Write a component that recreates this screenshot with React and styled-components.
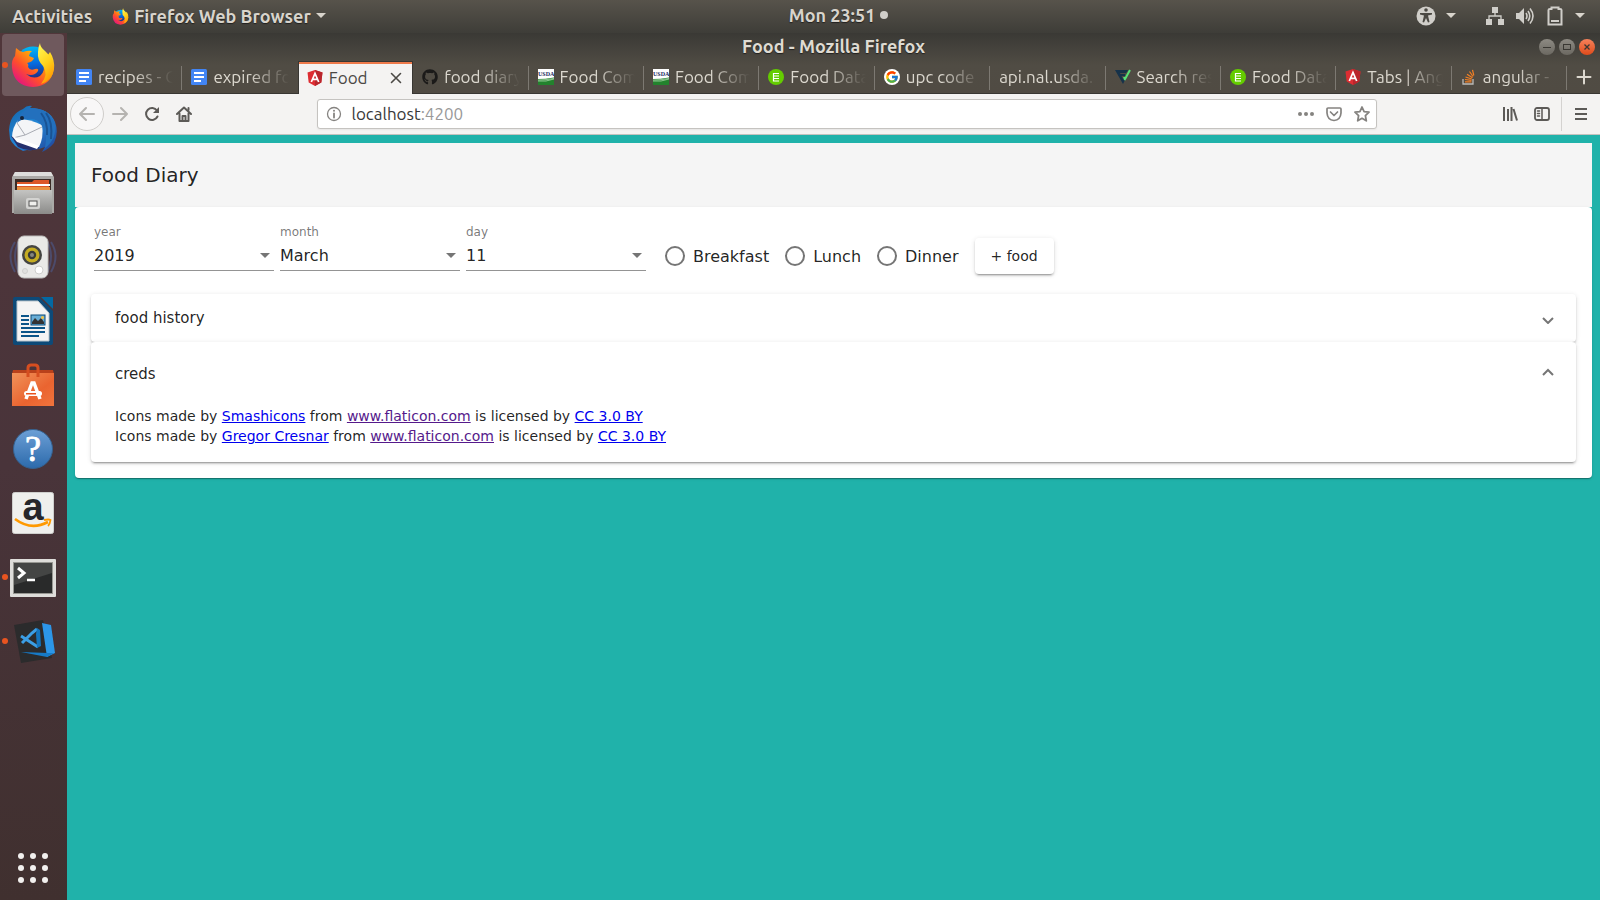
import React from "react";
import styled, { createGlobalStyle, css } from "styled-components";
import { FcGoogle } from "react-icons/fc";
import { FaGithub } from "react-icons/fa";

const Global = createGlobalStyle`
  * { box-sizing: border-box; }
  html, body { margin: 0; padding: 0; background: #20b2aa; }
  button, input, select { font: inherit; color: inherit; margin: 0; }
`;

const uiFont = `"Ubuntu", "Noto Sans", "Open Sans", sans-serif`;
const appFont = `"DejaVu Sans", sans-serif`;

/* ---------- desktop shell ---------- */

const Desktop = styled.div`
  display: flex;
  flex-direction: column;
  min-height: 100vh;
  font-family: ${uiFont};
`;

const TopBar = styled.header`
  display: grid;
  grid-template-columns: 1fr auto 1fr;
  align-items: start;
  height: 33px;
  padding: 0 15px 0 12px;
  background: linear-gradient(#57534b, #3e3d38);
  color: #d8d4cc;
  font-size: 18px;
  font-weight: 700;
  text-shadow: 0 1px 1px #22211f;
`;

const BarGroup = styled.div`
  display: flex;
  align-items: center;
  gap: ${(p) => p.$gap}px;
  justify-content: ${(p) => (p.$end ? "flex-end" : "flex-start")};
`;

const BarButton = styled.button`
  display: flex;
  align-items: center;
  gap: ${(p) => p.$gap || 5}px;
  height: 32px;
  padding: 0;
  border: 0;
  background: none;
  line-height: 32px;
  white-space: nowrap;
  text-shadow: inherit;
`;

const Clock = styled(BarButton)`
  height: 30px;
  padding-left: 80px;
`;

const ClockDot = styled.span`
  width: 8px;
  height: 8px;
  border-radius: 50%;
  background: #d0cec9;
`;

const Main = styled.div`
  display: flex;
  flex: 1;
`;

const Dock = styled.nav`
  display: flex;
  flex-direction: column;
  gap: 2px;
  width: 67px;
  flex: none;
  padding: 1px 3px 1px 2px;
  background: linear-gradient(#50363a, #49343a 50%, #40302f);
`;

const DockItem = styled.button`
  position: relative;
  display: grid;
  place-items: center;
  height: 62px;
  padding: 0;
  border: 0;
  border-radius: 4px;
  background: ${(p) => (p.$active ? "#6f595d" : "none")};
  margin-top: ${(p) => (p.$last ? "auto" : 0)};
  ${(p) =>
    p.$running &&
    css`
      &::before {
        content: "";
        position: absolute;
        left: 0;
        top: 28px;
        width: 6px;
        height: 6px;
        border-radius: 50%;
        background: #e95420;
      }
    `}
`;

const Browser = styled.div`
  display: flex;
  flex-direction: column;
  flex: 1;
  min-width: 0;
`;

const Chrome = styled.div`
  background: linear-gradient(#3a3935, #504c44 32px, #504b43);
`;

const TitleBar = styled.div`
  display: grid;
  grid-template-columns: 1fr auto 1fr;
  align-items: center;
  height: 28px;
  padding: 0 5px;
  color: #dfdbd2;
  font-size: 18px;
  font-weight: 700;
  line-height: 24px;
  text-shadow: 0 1px 1px #22211f;
`;

const Title = styled.span`
  grid-column: 2;
  padding-bottom: 2px;
`;

const WindowButtons = styled.div`
  display: flex;
  justify-content: flex-end;
  gap: 4px;
`;

const WindowButton = styled.button`
  display: grid;
  place-items: center;
  width: 16px;
  height: 16px;
  padding: 0;
  border: 0;
  border-radius: 50%;
  color: #3a3833;
  background: ${(p) => (p.$close ? "linear-gradient(#f5825b, #df4b1b)" : "linear-gradient(#8d8a83, #6b6861)")};
`;

const TabStrip = styled.div`
  display: flex;
  height: 33px;
  border-bottom: 1px solid #393733;
`;

const Tab = styled.button`
  position: relative;
  display: flex;
  align-items: center;
  gap: 6px;
  flex: 1 1 0;
  min-width: 0;
  height: ${(p) => (p.$active ? 33 : 32)}px;
  padding: 0 9px;
  border: 0;
  background: none;
  color: #dcd8cf;
  font-size: 17px;
  line-height: 32px;
  text-align: left;
  ${(p) =>
    p.$active
      ? css`
          padding: 0 8px;
          background: #f4f3f2;
          color: #4b4945;
          border: 1px solid #393733;
          border-bottom: 0;
          box-shadow: inset 0 2px #ee7a4b;
        `
      : css`
          &::after {
            content: "";
            display: ${p.$plain ? "none" : "block"};
            position: absolute;
            right: 0;
            top: 5px;
            width: 1px;
            height: 24px;
            background: #7d7972;
          }
        `}
`;

const TabLabel = styled.span`
  flex: 1;
  min-width: 0;
  overflow: hidden;
  white-space: nowrap;
  mask-image: ${(p) => (p.$fade ? "linear-gradient(to right, #000 calc(100% - 40px), transparent)" : "none")};
`;

const IconButton = styled.button`
  display: grid;
  place-items: center;
  width: ${(p) => p.$w || 32}px;
  height: ${(p) => p.$h || 32}px;
  flex: none;
  padding: 0;
  border: 0;
  background: none;
  color: ${(p) => p.$color || "#5c5a57"};
`;

const BackButton = styled(IconButton)`
  width: 34px;
  height: 34px;
  border: 1px solid #cfcdca;
  border-radius: 50%;
  background: #f8f7f7;
`;

const NavBar = styled.div`
  display: flex;
  align-items: center;
  height: 41px;
  padding: 0 3px;
  background: #f4f3f2;
  border-bottom: 1px solid #c4c2bf;
`;

const Spacer = styled.div`
  flex: 1;
`;

const AddressBar = styled.div`
  display: flex;
  align-items: center;
  flex: 9 1 0;
  height: 30px;
  border: 1px solid #c5c3c0;
  border-radius: 3px;
  background: #fff;
  box-shadow: 0 1px 2px rgba(0, 0, 0, 0.06);
`;

const Address = styled.div`
  flex: 1;
  padding-left: 1px;
  font-size: 17px;
  line-height: 30px;
  color: #383838;
  span { color: #999; }
`;

const ToolDivider = styled.span`
  width: 1px;
  height: 34px;
  margin: 0 3px;
  background: #d4d2d0;
`;

/* ---------- food diary page ---------- */

const Page = styled.main`
  flex: 1;
  padding: 8px;
  background: #20b2aa;
  color: rgba(0, 0, 0, 0.87);
  font-family: ${appFont};
`;

const AppBar = styled.h1`
  display: flex;
  align-items: center;
  height: 64px;
  margin: 0;
  padding: 0 16px;
  background: #f5f5f5;
  font-size: 20px;
  font-weight: 400;
`;

const Card = styled.section`
  padding: 16px;
  border-radius: 4px;
  background: #fff;
  box-shadow: 0 2px 1px -1px rgba(0, 0, 0, 0.2), 0 1px 1px rgba(0, 0, 0, 0.14), 0 1px 3px rgba(0, 0, 0, 0.12);
`;

const FormRow = styled.form`
  display: flex;
  align-items: flex-start;
  padding-bottom: 20px;
`;

const Field = styled.label`
  display: grid;
  width: 180px;
  margin: 0 3px;
`;

const FieldLabel = styled.span`
  font-size: 12px;
  line-height: 18px;
  color: rgba(0, 0, 0, 0.54);
`;

const SelectBox = styled.span`
  display: grid;
  grid-template-columns: 1fr 10px;
  align-items: center;
  padding-right: 4px;
  border-bottom: 1px solid #949494;
  svg { grid-area: 1 / 2; pointer-events: none; }
`;

const Select = styled.select`
  grid-area: 1 / 1 / 2 / 3;
  height: 29px;
  padding: 0;
  border: 0;
  outline: 0;
  appearance: none;
  background: none;
  font-size: 16px;
`;

const Controls = styled.div`
  display: flex;
  align-items: center;
  gap: 16px;
  margin: 15px 0 0 16px;
`;

const RadioLabel = styled.label`
  display: flex;
  align-items: center;
  gap: 8px;
  font-size: 16px;
`;

const Radio = styled.input`
  width: 20px;
  height: 20px;
  appearance: none;
  border: 2px solid rgba(0, 0, 0, 0.54);
  border-radius: 50%;
  &:checked { box-shadow: inset 0 0 0 3px #fff; background: #ff4081; }
`;

const AddButton = styled.button`
  height: 36px;
  padding: 0 16px;
  border: 0;
  border-radius: 4px;
  background: #fff;
  font-size: 14px;
  box-shadow: 0 3px 1px -2px rgba(0, 0, 0, 0.2), 0 2px 2px rgba(0, 0, 0, 0.14), 0 1px 5px rgba(0, 0, 0, 0.12);
`;

const Panel = styled.section`
  border-radius: 4px;
  background: #fff;
  box-shadow: 0 3px 1px -2px rgba(0, 0, 0, 0.2), 0 2px 2px rgba(0, 0, 0, 0.14), 0 1px 5px rgba(0, 0, 0, 0.12);
`;

const PanelHeader = styled.button`
  display: flex;
  align-items: center;
  justify-content: space-between;
  width: 100%;
  height: ${(p) => (p.$open ? 64 : 48)}px;
  padding: 0 22px 0 24px;
  border: 0;
  background: none;
  font-size: 15px;
`;

const PanelBody = styled.div`
  padding: 0 24px 16px;
  font-size: 14px;
  line-height: 20px;
`;

const Link = styled.a`
  color: ${(p) => (p.$visited ? "#551a8b" : "#0000ee")};
`;

/* ---------- icons ---------- */

const FirefoxIcon = ({ size, id }) => (
  <svg width={size} height={size} viewBox="0 0 44 46">
    <defs>
      <linearGradient id={id + "a"} x1="0.9" y1="0.1" x2="0.15" y2="0.9">
        <stop offset="0" stopColor="#ffe226" /><stop offset=".35" stopColor="#ff9a0c" />
        <stop offset=".65" stopColor="#ff4f2b" /><stop offset="1" stopColor="#e3157f" />
      </linearGradient>
      <linearGradient id={id + "b"} x1=".5" y1="0" x2=".6" y2="1">
        <stop offset="0" stopColor="#00b8f5" /><stop offset=".5" stopColor="#0668dc" /><stop offset="1" stopColor="#25206c" />
      </linearGradient>
      <linearGradient id={id + "c"} x1=".3" y1="0" x2=".7" y2="1">
        <stop offset="0" stopColor="#fff44f" /><stop offset=".5" stopColor="#ffd21c" /><stop offset="1" stopColor="#ff9100" />
      </linearGradient>
    </defs>
    <circle cx="22" cy="22" r="17.5" fill={`url(#${id}b)`} />
    <path d="M5 6 Q8 9 12 10 Q17 8 21 9 Q18 11 18 14 L23 16 Q22 20 16 21 Q18 22 17 25 Q19 29 24 27 Q28 26 27 29 Q23 35 15 32 Q22 38 29 34 Q35 29 32 20 L39 10 Q44 18 43 27 Q40 44 22 45 Q3 44 1 26 Q0 18 4 14 Z" fill={`url(#${id}a)`} />
    <path d="M29 1 Q29 5 34 9 Q43 17 43 26 Q42 38 30 42 Q38 32 32 24 Q26 18 27 10 Q27 5 29 1 Z" fill={`url(#${id}c)`} />
  </svg>
);

const ThunderbirdIcon = () => (
  <svg width="50" height="48" viewBox="0 0 50 48">
    <defs>
      <linearGradient id="tb" x1="0" y1="0" x2="1" y2="1">
        <stop offset="0" stopColor="#1464a8" /><stop offset=".5" stopColor="#2387d8" /><stop offset="1" stopColor="#213c91" />
      </linearGradient>
    </defs>
    <path d="M1 25 Q2 9 15 4 Q19 0 24 1 L22 3 Q41 3 47 17 Q51 28 46 38 Q41 44 34 47 L37 42 Q28 46 19 45 L15 46 Q5 41 2 34 Z" fill="url(#tb)" />
    <path d="M11 14 Q22 14 34 20 Q36 32 31 42 L4 33 Q4 22 11 14 Z" fill="#f4f5f7" />
    <path d="M9 18 L17 30 L34 22 M17 30 L5 33" stroke="#a8abb3" strokeWidth="1" fill="none" />
    <path d="M9 18 Q11 6 22 3 Q42 3 47 19 Q49 34 37 43 Q40 29 34 21 Q29 12 19 14 Q13 14 9 18" fill="#2370bd" />
    <path d="M38 8 Q45 17 43 34 M33 8 Q40 17 39 30" stroke="#195394" strokeWidth="2" fill="none" />
    <path d="M3 31 L32 43 Q22 48 10 42 Z" fill="#26306d" />
    <path d="M4 31 L31 41 L29 44 L9 37 Z" fill="#fff" />
    <circle cx="14" cy="13" r="2" fill="#17253a" />
  </svg>
);

const FilesIcon = () => (
  <svg width="42" height="44" viewBox="0 0 42 44">
    <defs><linearGradient id="fi" x2="0" y2="1"><stop stopColor="#c4c4c2" /><stop offset="1" stopColor="#8b8b89" /></linearGradient></defs>
    <path d="M3 1 H39 L42 6 V42 H0 V6 Z" fill="#aaa9a6" />
    <path d="M3 1 H39 L41 5 H1 Z" fill="#dededc" />
    <rect x="3" y="8" width="36" height="13" fill="#3a2b25" />
    <path d="M5 11 H20 L22 9 H37 V20 H5 Z" fill="#dc5728" />
    <rect x="5" y="13" width="33" height="2" fill="#fff" /><rect x="5" y="16" width="33" height="3" fill="#e99241" />
    <rect x="2" y="19" width="38" height="24" fill="url(#fi)" />
    <rect x="14" y="27" width="14" height="11" rx="2" fill="#d3d3d1" />
    <rect x="17" y="30" width="8" height="5" fill="#efefed" stroke="#555" />
  </svg>
);

const SpeakerIcon = () => (
  <svg width="50" height="44" viewBox="0 0 50 44">
    <path d="M7 7 Q-2 21 7 37 M11 6 Q3 21 11 38 M43 7 Q52 21 43 37 M39 6 Q47 21 39 38" stroke="#4c4b6b" strokeWidth="2" fill="none" />
    <rect x="10" y="1" width="30" height="42" rx="6" fill="#e9e9e7" stroke="#bdbdbb" />
    <circle cx="24" cy="20" r="10" fill="#444442" /><circle cx="24" cy="20" r="7.5" fill="#c5ac22" />
    <circle cx="24" cy="20" r="4.200" fill="#3a3a37" /><circle cx="24" cy="20" r="2" fill="#85857e" />
    <circle cx="31" cy="35" r="4" fill="#fff" stroke="#cfcfcd" /><circle cx="17" cy="36" r="2.500" fill="#e1e1df" stroke="#d0d0ce" />
  </svg>
);

const WriterIcon = () => (
  <svg width="40" height="48" viewBox="0 0 40 48">
    <path d="M2 0 H26 L40 14 V46 Q40 48 38 48 H2 Q0 48 0 46 V2 Q0 0 2 0 Z" fill="#0d4a78" />
    <path d="M28 0 H40 V12 Z" fill="#0369a3" />
    <path d="M4 4 H25 L36 16 V44 H4 Z" fill="#f4f4f4" stroke="#b8c4cc" />
    <path d="M8 19 H16 M8 23 H16 M8 27 H16 M8 31 H32 M8 35 H32 M8 39 H26" stroke="#0b5589" strokeWidth="2" />
    <rect x="18" y="18" width="14" height="10" fill="#68add6" stroke="#0b4a78" />
    <path d="M19 27 V25 L22 21 L25 24 L28 21 L31 25 V27 Z" fill="#333" /><circle cx="29.5" cy="20.5" r="1.5" fill="#f6c342" />
  </svg>
);

const SoftwareIcon = () => (
  <svg width="42" height="44" viewBox="0 0 42 44">
    <defs><linearGradient id="sw" x2="1" y2="1"><stop stopColor="#f0935a" /><stop offset=".6" stopColor="#ea6430" /><stop offset="1" stopColor="#f1743d" /></linearGradient></defs>
    <path d="M1 7 H41 L42 11 H0 Z" fill="#b9411b" />
    <rect y="10" width="42" height="33" fill="url(#sw)" />
    <path d="M16 14 V5 Q16 2 19 2 H23 Q26 2 26 5 V14" stroke="#d64e20" strokeWidth="3" fill="none" />
    <path d="M14 36 L20 20 H22 L28 36" stroke="#fff" strokeWidth="3.5" fill="none" />
    <rect x="12" y="28" width="18" height="5" rx="2.5" fill="#fff" /><rect x="14" y="30" width="10" height="1.5" fill="#e95420" />
  </svg>
);

const HelpIcon = () => (
  <svg width="42" height="42" viewBox="0 0 42 42">
    <defs><linearGradient id="hp" x2="0" y2="1"><stop stopColor="#6c9fd6" /><stop offset="1" stopColor="#2c6aab" /></linearGradient></defs>
    <circle cx="21" cy="21" r="19.5" fill="url(#hp)" stroke="#35618f" />
    <text x="21" y="33" textAnchor="middle" fontFamily="Liberation Serif, serif" fontSize="36" fill="#fff" stroke="#fff" strokeWidth=".8">?</text>
  </svg>
);

const AmazonIcon = () => (
  <svg width="42" height="42" viewBox="0 0 42 42" overflow="visible">
    <rect x=".5" y=".5" width="41" height="41" rx="2" fill="#efefed" stroke="#cfcfcd" />
    <text x="21" y="28" textAnchor="middle" fontFamily="Liberation Sans, sans-serif" fontSize="38" fontWeight="700" fill="#26262a">a</text>
    <path d="M3 27 Q19 39 36 30" stroke="#f90" strokeWidth="2.6" fill="none" />
    <path d="M32 28 Q37 27 38.500 28 Q38 32 36 34" stroke="#f90" strokeWidth="1.8" fill="none" />
  </svg>
);

const TerminalIcon = () => (
  <svg width="46" height="40" viewBox="0 -2 46 40">
    <rect width="46" height="38" rx="1" fill="#deddda" /><rect x="3" y="3" width="40" height="32" fill="#979792" />
    <rect x="4" y="4" width="38" height="30" fill="#292a2a" /><path d="M4 4 H42 V14 L4 26 Z" fill="#444544" />
    <path d="M8 9 L14 14 L8 19" stroke="#fff" strokeWidth="3" fill="none" /><path d="M17 21 H25" stroke="#fff" strokeWidth="2.500" />
  </svg>
);

const CodeIcon = () => (
  <svg width="46" height="44" viewBox="-4 0 46 44">
    <path d="M0 6 L29 1 L38 39 L7 44 Z" fill="#2b2b2c" />
    <path d="M28 4 L37 6 L41 34 L33 38 Z" fill="#2c96e8" /><path d="M7 33 L34 34 L40 34 L33 38 Z" fill="#167ac6" />
    <path d="M23 10 L18 14 L8 24 M7 17 L24 28" stroke="#3b9ee5" strokeWidth="3" fill="none" />
    <path d="M23 9 L26 11 L27 27 L23 29 L22 15 Z" fill="#1474bd" />
  </svg>
);

const AppsIcon = () => (
  <svg width="30" height="30" viewBox="0 0 30 30" fill="#f2f0ee">
    {[3, 15, 27].map((y) => [3, 15, 27].map((x) => <circle key={x + "-" + y} cx={x} cy={y} r="3" />))}
  </svg>
);

const DocsIcon = () => (
  <svg width="16" height="16" viewBox="0 0 16 16"><rect width="16" height="16" rx="1.500" fill="#4285f4" />
    <path d="M3 4 H13 M3 8 H13 M3 12 H10" stroke="#fff" strokeWidth="2" /></svg>
);
const AngularIcon = () => (
  <svg width="16" height="16" viewBox="0 0 16 16"><path d="M8 0 L15.500 2.600 L14.300 12.500 L8 16 L1.700 12.500 L.5 2.600 Z" fill="#dd2d32" />
    <path d="M8 0 L15.500 2.600 L14.300 12.500 L8 16 Z" fill="#b9262c" />
    <path d="M4.300 12 L8 3.500 L11.700 12 M5.800 9.300 H10.200" stroke="#fff" strokeWidth="1.700" fill="none" /></svg>
);
const UsdaIcon = () => (
  <svg width="16" height="16" viewBox="0 0 16 16"><rect width="16" height="16" fill="#fff" />
    <text x="0" y="7" fontFamily="Liberation Serif, serif" fontSize="6" fontWeight="700" fill="#1a2b60">USDA</text>
    <path d="M0 10 Q7 10 16 8.500 V16 H0 Z" fill="#23822d" /><path d="M0 12 Q8 13 16 10 M0 11 Q8 11 16 9.500" stroke="#a8d7a9" fill="none" strokeWidth=".8" /></svg>
);
const EdamamIcon = () => (
  <svg width="16" height="16" viewBox="0 0 16 16"><circle cx="8" cy="8" r="8" fill="#64cc00" />
    <path d="M5 4.500 H11 M5 7 H11 M5 9.500 H11 M5 12 H11 M5.500 4 V12.500" stroke="#fff" strokeWidth="1.200" /></svg>
);
const GoogleIcon = () => (
  <svg width="16" height="16" viewBox="0 0 16 16"><circle cx="8" cy="8" r="8" fill="#fff" /><FcGoogle x="1" y="1" size="14" /></svg>
);
const NutritionIcon = () => (
  <svg width="16" height="16" viewBox="0 0 16 16"><path d="M0 1 H13 L11 4 H5 L8 10 L10 7 L11 9 L8 15 Z" fill="#16324a" /><path d="M4 6 H10" stroke="#16324a" strokeWidth="2" />
    <path d="M15 1 L9.500 11 M9 8 L10 11" stroke="#58e276" strokeWidth="2" fill="none" /></svg>
);
const StackIcon = () => (
  <svg width="16" height="16" viewBox="0 0 16 16" fill="none"><path d="M2 10 V15 H12 V10" stroke="#bcbbb8" strokeWidth="1.300" />
    <path d="M4 12.800 H10.500 M4 10.500 L10.500 11.300 M4.500 8 L10.800 10 M6 5.200 L11.500 8.800 M8.500 2.500 L12 7.500 M11.500 .8 L12.800 6.500" stroke="#f48024" strokeWidth="1.200" /></svg>
);

const Caret = () => <svg width="10" height="6" viewBox="0 0 10 6"><path d="M0 0 H10 L5 5 Z" fill="currentColor" /></svg>;

const AccessIcon = () => (
  <svg width="20" height="20" viewBox="0 0 20 20"><circle cx="10" cy="10" r="9.500" fill="#d0cec9" />
    <circle cx="10" cy="4" r="1.800" fill="#4a4842" /><path d="M4 7 H16 V8.500 L12 9.500 L13.500 16 L12 16.500 L10 12 L8 16.500 L6.500 16 L8 9.500 L4 8.500 Z" fill="#4a4842" /></svg>
);
const NetworkIcon = () => (
  <svg width="18" height="18" viewBox="0 0 18 18" fill="#d0cec9"><path d="M6 0 H12 V6 H6 Z M0 12 H6 V18 H0 Z M12 12 H18 V18 H12 Z" /><path d="M9 5 V9 M3 13 V9 H15 V13" stroke="#d0cec9" strokeWidth="1.300" fill="none" /></svg>
);
const VolumeIcon = () => (
  <svg width="19" height="18" viewBox="0 0 19 18"><path d="M0 6 H3 L8 1 V17 L3 12 H0 Z" fill="#d0cec9" /><path d="M10 6 Q12 9 10 12 M12 4 Q15.500 9 12 14 M14 1.500 Q20 9 14 16.500" stroke="#d0cec9" strokeWidth="1.600" fill="none" /></svg>
);
const BatteryIcon = () => (
  <svg width="16" height="20" viewBox="0 0 16 20"><path d="M1.500 4 Q1.500 3 3 3 H4.500 V1.500 H11.500 V3 H13 Q14.500 3 14.500 4 V18.500 H1.500 Z" stroke="#d0cec9" strokeWidth="2" fill="none" /><path d="M4 15 H12" stroke="#d0cec9" strokeWidth="2" /></svg>
);

const Stroke = ({ size = 16, w = 2, children }) => (
  <svg width={size} height={size} viewBox="0 0 16 16" fill="none" stroke="currentColor" strokeWidth={w} strokeLinecap="round" strokeLinejoin="round">{children}</svg>
);

const Chevron = ({ up }) => (
  <svg width="12" height="12" viewBox="0 0 12 12" fill="none" stroke="rgba(0,0,0,.54)" strokeWidth="2">
    <path d={up ? "M1 7 L6 2 L11 7" : "M1 6 L6 11 L11 6"} />
  </svg>
);

/* ---------- data ---------- */

const dockItems = [
  { name: "Firefox", icon: <FirefoxIcon size={46} id="dock" />, active: true, running: true },
  { name: "Thunderbird", icon: <ThunderbirdIcon /> },
  { name: "Files", icon: <FilesIcon /> },
  { name: "Rhythmbox", icon: <SpeakerIcon /> },
  { name: "Writer", icon: <WriterIcon /> },
  { name: "Software", icon: <SoftwareIcon /> },
  { name: "Help", icon: <HelpIcon /> },
  { name: "Amazon", icon: <AmazonIcon /> },
  { name: "Terminal", icon: <TerminalIcon />, running: true },
  { name: "Code", icon: <CodeIcon />, running: true },
];

const tabs = [
  { label: "recipes - G", icon: <DocsIcon /> },
  { label: "expired fo", icon: <DocsIcon />, plain: true },
  { label: "Food", icon: <AngularIcon />, active: true },
  { label: "food diary", icon: <FaGithub size={16} color="#1b1a19" /> },
  { label: "Food Com", icon: <UsdaIcon /> },
  { label: "Food Com", icon: <UsdaIcon /> },
  { label: "Food Data", icon: <EdamamIcon /> },
  { label: "upc code", icon: <GoogleIcon /> },
  { label: "api.nal.usda." },
  { label: "Search res", icon: <NutritionIcon /> },
  { label: "Food Data", icon: <EdamamIcon /> },
  { label: "Tabs | Ang", icon: <AngularIcon /> },
  { label: "angular -", icon: <StackIcon /> },
];

const fields = [
  { label: "year", value: "2019" },
  { label: "month", value: "March" },
  { label: "day", value: "11" },
];

const credits = [
  { author: "Smashicons", site: "www.flaticon.com" },
  { author: "Gregor Cresnar", site: "www.flaticon.com" },
];

export default function App() {
  return (
    <Desktop>
      <Global />
      <TopBar>
        <BarGroup $gap={20}>
          <BarButton>Activities</BarButton>
          <BarButton><FirefoxIcon size={17} id="bar" />Firefox Web Browser<Caret /></BarButton>
        </BarGroup>
        <Clock>Mon 23:51<ClockDot /></Clock>
        <BarGroup $gap={30} $end>
          <BarButton $gap={10} aria-label="Accessibility"><AccessIcon /><Caret /></BarButton>
          <BarButton $gap={12} aria-label="System"><NetworkIcon /><VolumeIcon /><BatteryIcon /><Caret /></BarButton>
        </BarGroup>
      </TopBar>
      <Main>
        <Dock>
          {dockItems.map((d) => (
            <DockItem key={d.name} aria-label={d.name} $active={d.active} $running={d.running}>{d.icon}</DockItem>
          ))}
          <DockItem $last aria-label="Show applications"><AppsIcon /></DockItem>
        </Dock>
        <Browser>
          <Chrome>
            <TitleBar>
              <Title>Food - Mozilla Firefox</Title>
              <WindowButtons>
                <WindowButton aria-label="Minimize"><svg width="8" height="8"><path d="M0 4.500 H8" stroke="currentColor" /></svg></WindowButton>
                <WindowButton aria-label="Maximize"><svg width="8" height="8"><rect x=".5" y="1.500" width="7" height="5" fill="none" stroke="currentColor" /></svg></WindowButton>
                <WindowButton $close aria-label="Close window"><svg width="8" height="8"><path d="M1.500 1.500 L6.500 6.500 M6.500 1.500 L1.500 6.500" stroke="currentColor" strokeWidth="1.300" /></svg></WindowButton>
              </WindowButtons>
            </TitleBar>
            <TabStrip>
              {tabs.map((t, i) => (
                <Tab key={i} $active={t.active} $plain={t.plain}>
                  {t.icon}
                  <TabLabel $fade={!t.active}>{t.label}</TabLabel>
                  {t.active && <Stroke size={16} w={1.6}><path d="M3.500 3.500 L12.500 12.500 M12.500 3.500 L3.500 12.500" /></Stroke>}
                </Tab>
              ))}
              <IconButton $w={33} $color="#dcd8cf" aria-label="New tab"><Stroke><path d="M8 1.500 V14.500 M1.500 8 H14.500" /></Stroke></IconButton>
            </TabStrip>
          </Chrome>
          <NavBar>
            <BackButton $color="#b5b3b0" aria-label="Back"><Stroke><path d="M15 8 H1 M7 2 L1 8 L7 14" /></Stroke></BackButton>
            <IconButton $color="#b5b3b0" aria-label="Forward"><Stroke><path d="M1 8 H15 M9 2 L15 8 L9 14" /></Stroke></IconButton>
            <IconButton aria-label="Reload"><Stroke><path d="M13 4.500 A6 6 0 1 0 13.500 10.500" /><path d="M15 1 V7 H9 Z" fill="currentColor" strokeWidth="0" /></Stroke></IconButton>
            <IconButton aria-label="Home"><Stroke><path d="M1 8 L8 1.500 L15 8 M3.500 7.500 V15 H12.500 V7.500" /><path d="M6.500 15 V10 H9.500 V15 M12.500 2 V4" /></Stroke></IconButton>
            <Spacer />
            <AddressBar>
              <IconButton $color="#858380" aria-label="Site information"><Stroke w={1.3}><circle cx="8" cy="8" r="6.500" /><path d="M8 7.500 V11.500" strokeWidth="1.800" /><path d="M8 4.700 V4.800" strokeWidth="2" /></Stroke></IconButton>
              <Address>localhost<span>:4200</span></Address>
              <IconButton $w={28} $h={28} $color="#858380" aria-label="Page actions"><svg width="16" height="16" fill="currentColor"><circle cx="2" cy="8" r="2" /><circle cx="8" cy="8" r="2" /><circle cx="14" cy="8" r="2" /></svg></IconButton>
              <IconButton $w={28} $h={28} $color="#858380" aria-label="Save to Pocket"><Stroke w={1.7}><path d="M2 2 H14 Q15 2 15 3 V7 Q14.500 14 8 14.500 Q1.500 14 1 7 V3 Q1 2 2 2 Z M4.500 6 L8 9.500 L11.500 6" /></Stroke></IconButton>
              <IconButton $w={28} $h={28} $color="#858380" aria-label="Bookmark"><Stroke w={1.8}><path d="M8 1 L10.100 5.600 L15 6.200 L11.400 9.700 L12.300 14.800 L8 12.300 L3.700 14.800 L4.600 9.700 L1 6.200 L5.900 5.600 Z" /></Stroke></IconButton>
            </AddressBar>
            <Spacer />
            <IconButton aria-label="Library"><svg width="16" height="16" fill="none" stroke="currentColor" strokeWidth="2"><path d="M2 1 V15 M6 3 V15 M9.500 1 V15 M11.500 3 L15 14.500" /></svg></IconButton>
            <IconButton aria-label="Sidebars"><Stroke w={1.8}><rect x="1" y="2" width="14" height="12" rx="2" /><path d="M8 2 V14 M3.500 5 H5.500 M3.500 7.500 H5.500 M3.500 10 H5.500" strokeWidth="1.500" /></Stroke></IconButton>
            <ToolDivider />
            <IconButton aria-label="Menu"><svg width="12" height="12" stroke="currentColor" strokeWidth="2"><path d="M0 1 H12 M0 6 H12 M0 11 H12" /></svg></IconButton>
          </NavBar>
          <Page>
            <AppBar>Food Diary</AppBar>
            <Card>
              <FormRow>
                {fields.map((f) => (
                  <Field key={f.label}>
                    <FieldLabel>{f.label}</FieldLabel>
                    <SelectBox>
                      <Select defaultValue={f.value}><option>{f.value}</option></Select>
                      <svg width="10" height="5"><path d="M0 0 H10 L5 5 Z" fill="rgba(0,0,0,.54)" /></svg>
                    </SelectBox>
                  </Field>
                ))}
                <Controls>
                  {["Breakfast", "Lunch", "Dinner"].map((m) => (
                    <RadioLabel key={m}><Radio type="radio" name="meal" value={m} />{m}</RadioLabel>
                  ))}
                  <AddButton type="button">+ food</AddButton>
                </Controls>
              </FormRow>
              <Panel>
                <PanelHeader aria-expanded="false">food history<Chevron /></PanelHeader>
              </Panel>
              <Panel>
                <PanelHeader $open aria-expanded="true">creds<Chevron up /></PanelHeader>
                <PanelBody>
                  {credits.map((c) => (
                    <div key={c.author}>
                      Icons made by <Link href="#author">{c.author}</Link> from <Link href="#site" $visited>{c.site}</Link> is licensed by <Link href="#license">CC 3.0 BY</Link>
                    </div>
                  ))}
                </PanelBody>
              </Panel>
            </Card>
          </Page>
        </Browser>
      </Main>
    </Desktop>
  );
}
